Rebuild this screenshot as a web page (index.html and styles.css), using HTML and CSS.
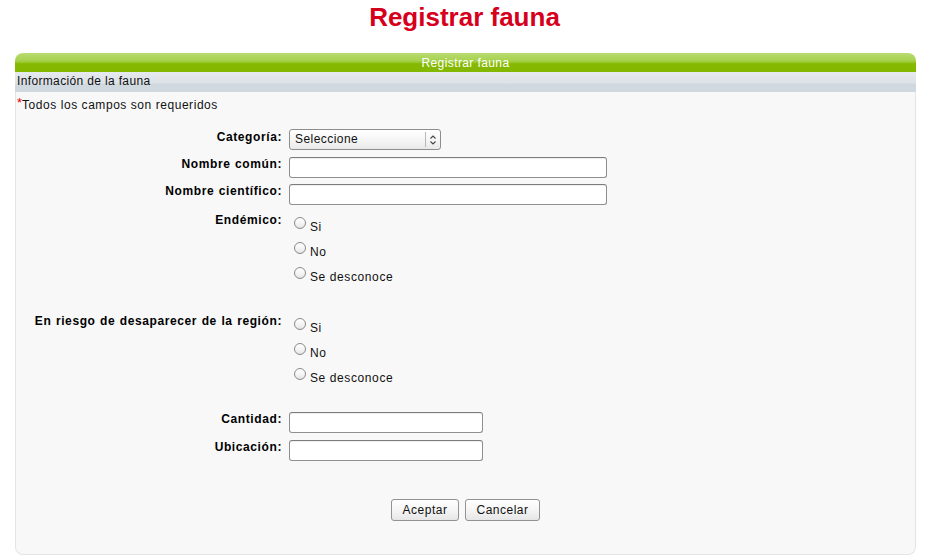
FILE: index.html
```html
<!DOCTYPE html>
<html lang="es">
<head>
<meta charset="utf-8">
<title>Registrar fauna</title>
<link rel="stylesheet" href="styles.css">
</head>
<body>
<h1 class="page-title">Registrar fauna</h1>
<div class="panel">
  <div class="panel-head">Registrar fauna</div>
  <div class="panel-section">Información de la fauna</div>
  <div class="panel-body">
    <p class="note"><span class="req">*</span>Todos los campos son requeridos</p>
    <form class="form">
      <div class="row row-cat">
        <label class="lbl lbl-cat">Categoría:</label>
        <div class="select-wrap">
          <select class="select"><option>Seleccione</option></select>
          <span class="select-arrow"><svg width="8" height="12" viewBox="0 0 8 12"><path d="M1.5 4.5 L4 2 L6.5 4.5 M1.5 7.5 L4 10 L6.5 7.5" fill="none" stroke="#444" stroke-width="1.1"/></svg></span>
        </div>
      </div>
      <div class="row row-b">
        <label class="lbl">Nombre común:</label>
        <input class="txt txt-long" type="text">
      </div>
      <div class="row row-c">
        <label class="lbl">Nombre científico:</label>
        <input class="txt txt-long" type="text">
      </div>
      <div class="row row-radio row-d">
        <label class="lbl">Endémico:</label>
        <div class="opts">
          <label class="opt"><input class="radio" type="radio" name="endemico"><span>Si</span></label>
          <label class="opt"><input class="radio" type="radio" name="endemico"><span>No</span></label>
          <label class="opt"><input class="radio" type="radio" name="endemico"><span>Se desconoce</span></label>
        </div>
      </div>
      <div class="row row-radio row-e">
        <label class="lbl">En riesgo de desaparecer de la región:</label>
        <div class="opts">
          <label class="opt"><input class="radio" type="radio" name="riesgo"><span>Si</span></label>
          <label class="opt"><input class="radio" type="radio" name="riesgo"><span>No</span></label>
          <label class="opt"><input class="radio" type="radio" name="riesgo"><span>Se desconoce</span></label>
        </div>
      </div>
      <div class="row row-f">
        <label class="lbl">Cantidad:</label>
        <input class="txt txt-short" type="text">
      </div>
      <div class="row row-g">
        <label class="lbl">Ubicación:</label>
        <input class="txt txt-short" type="text">
      </div>
      <div class="actions">
        <button class="btn btn-ok" type="button">Aceptar</button>
        <button class="btn btn-cancel" type="button">Cancelar</button>
      </div>
    </form>
  </div>
</div>
</body>
</html>
```

FILE: styles.css
```css
* { box-sizing: border-box; }
html, body { margin: 0; padding: 0; background: #ffffff; }
body {
  font-family: "Liberation Sans", Arial, sans-serif;
  font-size: 12px;
  color: #111;
}
.page-title {
  margin: 2px 0 21px;
  height: 30px;
  line-height: 30px;
  font-size: 26px;
  font-weight: bold;
  color: #d6001c;
  text-align: center;
}
.panel {
  margin: 0 13px 0 15px;
  width: 901px;
}
.panel-head {
  height: 19px;
  line-height: 19px;
  padding-top: 1px;
  border-radius: 8px 8px 0 0;
  background: linear-gradient(to bottom, #b9dc72 0%, #a7d14e 40%, #94c425 52%, #86b900 56%, #83b700 100%);
  color: #fff;
  text-align: center;
  letter-spacing: 0.4px;
}
.panel-section {
  height: 20px;
  line-height: 18px;
  padding-left: 2px;
  background: linear-gradient(to bottom, #e6e9ed 0%, #dde2e7 55%, #d1d9e0 60%, #cfd8df 100%);
  color: #111;
  letter-spacing: 0.35px;
}
.panel-body {
  background: #f8f8f8;
  border: 1px solid #e4e4e4;
  border-top: none;
  border-radius: 0 0 8px 8px;
  padding: 6px 0 33px;
}
.note {
  margin: 0;
  padding-left: 1px;
  line-height: 14px;
  letter-spacing: 0.55px;
  color: #111;
}
.req {
  color: #e00000;
  font-size: 13px;
  position: relative;
  top: -2px;
  letter-spacing: 0;
}
.form { margin: 17px 0 0; }
.row {
  display: flex;
  align-items: flex-start;
  column-gap: 7px;
}
.lbl {
  flex: 0 0 266px;
  text-align: right;
  font-weight: bold;
  line-height: 14px;
  letter-spacing: 0.6px;
  word-spacing: 0.6px;
  color: #000;
}
.lbl-cat { padding-top: 1px; }
.row-b { margin-top: 7px; }
.row-c { margin-top: 6px; }
.row-d { margin-top: 8px; }
.row-e { margin-top: 26px; }
.row-f { margin-top: 23px; }
.row-g { margin-top: 7px; }

.select-wrap {
  position: relative;
  width: 152px;
  height: 21px;
}
.select {
  -webkit-appearance: none;
  appearance: none;
  width: 152px;
  height: 21px;
  margin: 0;
  padding: 0 0 0 5px;
  border: 1px solid #8e8e8e;
  border-radius: 3px;
  background: linear-gradient(to bottom, #ffffff 0%, #f4f4f4 60%, #e9e9e9 100%);
  font-family: "Liberation Sans", Arial, sans-serif;
  font-size: 12px;
  letter-spacing: 0.45px;
  color: #111;
  line-height: 19px;
}
.select-arrow {
  position: absolute;
  right: 1px;
  top: 3px;
  width: 15px;
  height: 15px;
  border-left: 1px solid #b8b8b8;
  display: flex;
  align-items: center;
  justify-content: center;
  pointer-events: none;
}
.txt {
  height: 21px;
  margin: 0;
  padding: 0 4px;
  border: 1px solid #8f8f8f;
  border-top-color: #7c7c7c;
  border-radius: 3px;
  background: #fff;
  box-shadow: inset 0 1px 1px rgba(0,0,0,0.07);
  font-family: "Liberation Sans", Arial, sans-serif;
  font-size: 12px;
}
.txt-long { width: 318px; }
.txt-short { width: 194px; }

.opts { display: flex; flex-direction: column; }
.opt {
  display: flex;
  align-items: flex-start;
  height: 25px;
  line-height: 14px;
  letter-spacing: 0.6px;
  color: #111;
}
.opt span { padding-top: 7px; }
.radio {
  -webkit-appearance: none;
  appearance: none;
  width: 12px;
  height: 12px;
  margin: 4px 4px 0 5px;
  border: 1px solid #8a8a8a;
  border-radius: 50%;
  background: linear-gradient(to bottom, #ffffff 0%, #f3f3f3 60%, #e4e4e4 100%);
}
.actions {
  display: flex;
  justify-content: center;
  column-gap: 6px;
  margin-top: 37.5px;
}
.btn {
  height: 22px;
  margin: 0;
  padding: 0;
  border: 1px solid #929292;
  border-radius: 3px;
  background: linear-gradient(to bottom, #ffffff 0%, #f5f5f5 50%, #e6e6e6 100%);
  font-family: "Liberation Sans", Arial, sans-serif;
  font-size: 12px;
  letter-spacing: 0.5px;
  color: #111;
}
.btn-ok { width: 68px; }
.btn-cancel { width: 75px; }
```
